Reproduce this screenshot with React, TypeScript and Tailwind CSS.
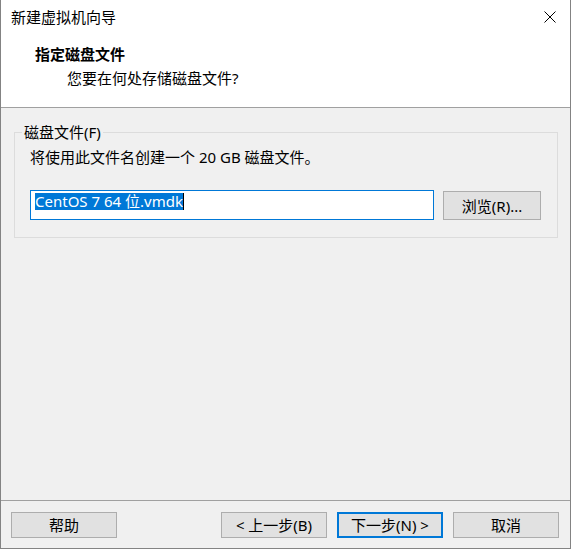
import React from "react";

function Btn({ label, def = false }: { label: string; def?: boolean }) {
  return (
    <div
      className={
        "w-[106px] h-[26px] flex items-center justify-center bg-[#e1e1e1] text-[15px] leading-[20px] text-black " +
        (def ? "border-2 border-[#0078d7]" : "border border-[#adadad]")
      }
    >
      {label}
    </div>
  );
}

export default function App() {
  return (
    <div className="w-[571px] h-[549px] flex flex-col bg-[#f0f0f0] border-x border-b border-[#838383] font-['Noto_Sans','Noto_Sans_CJK_SC',sans-serif] text-black select-none">
      {/* white top area */}
      <div className="bg-white flex flex-col">
        <div className="h-[34px] flex items-center justify-between pl-[10px]">
          <span className="text-[15px] leading-[20px]">新建虚拟机向导</span>
          <svg width="12" height="12" viewBox="0 0 12 12" className="mr-[14px]">
            <path d="M0.5 0.5 L11.5 11.5 M11.5 0.5 L0.5 11.5" stroke="#000" strokeWidth="1" fill="none" />
          </svg>
        </div>
        <div className="h-[73px] flex flex-col pt-[10px]">
          <div className="pl-[34px] text-[15px] leading-[20px] font-bold">指定磁盘文件</div>
          <div className="pl-[66px] mt-[4px] text-[15px] leading-[20px]">您要在何处存储磁盘文件?</div>
        </div>
      </div>
      <div className="h-px bg-[#a0a0a0]" />

      {/* body */}
      <div className="flex-1 flex flex-col">
        <fieldset className="mt-[14px] ml-[13px] mr-[12px] m-0 p-0 min-w-0 border border-[#dcdcdc] pl-[15px] pr-[16px] pb-[17px]">
          <legend className="ml-[-8px] px-[2px] text-[15px] leading-[20px]">磁盘文件(F)</legend>
          <div className="mt-[5px] text-[15px] leading-[20px]">将使用此文件名创建一个 20 GB 磁盘文件。</div>
          <div className="mt-[23px] flex items-start">
            <div className="w-[404px] h-[30px] border border-[#0078d7] bg-white pl-[4px] pt-[2px] flex items-start">
              <span className="bg-[#0078d7] text-white text-[15px] leading-[17px] h-[17px] whitespace-pre">CentOS 7 64 位.vmdk</span>
              <span className="w-px h-[17px] bg-black" />
            </div>
            <div className="ml-[9px] mt-[1px] w-[98px] h-[29px] flex items-center justify-center bg-[#e1e1e1] border border-[#adadad] text-[15px] leading-[20px]">
              浏览(R)...
            </div>
          </div>
        </fieldset>
      </div>

      <div className="h-px bg-[#a0a0a0]" />
      {/* footer */}
      <div className="h-[47px] flex items-start pt-[11px] pl-[10px] pr-[11px]">
        <Btn label="帮助" />
        <div className="flex-1" />
        <div className="flex gap-[10px]">
          <Btn label="< 上一步(B)" />
          <Btn label="下一步(N) >" def />
          <Btn label="取消" />
        </div>
      </div>
    </div>
  );
}
